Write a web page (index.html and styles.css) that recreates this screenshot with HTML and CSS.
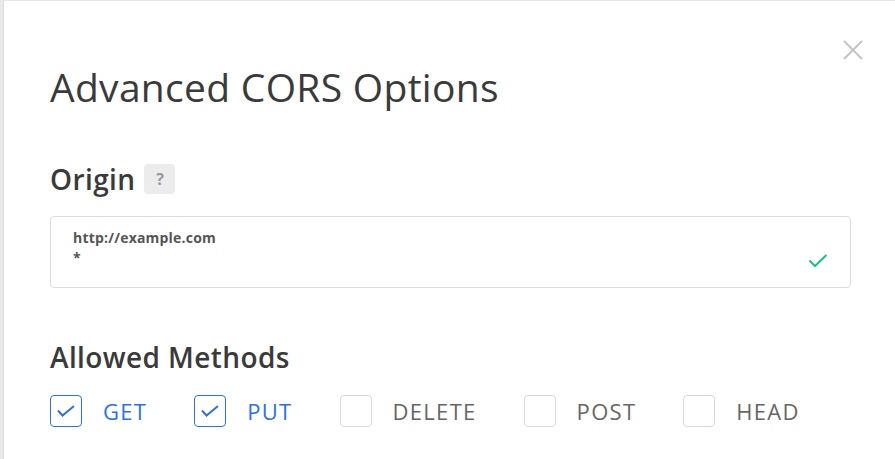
FILE: index.html
```html
<!DOCTYPE html>
<html>
<head>
<meta charset="utf-8">
<link rel="stylesheet" href="styles.css">
</head>
<body>
<div class="modal">
  <button class="close" aria-label="Close">
    <svg width="20" height="20" viewBox="0 0 20 20"><path d="M1 1 L19 19 M19 1 L1 19" stroke="#c4c4c4" stroke-width="2" fill="none"/></svg>
  </button>
  <h1 class="title">Advanced CORS Options</h1>
  <div class="section-head">
    <h2 class="label">Origin</h2>
    <span class="help">?</span>
  </div>
  <div class="input">
    <div class="input-text">
      <div class="line">http://example.com</div>
      <div class="line">*</div>
    </div>
    <svg class="ok" width="20" height="14" viewBox="0 0 20 14"><path d="M1.5 6.5 L7 12 L18.5 1" stroke="#1ec37a" stroke-width="2" fill="none"/></svg>
  </div>
  <h2 class="label methods-label">Allowed Methods</h2>
  <div class="methods">
    <label class="method checked"><span class="box"><svg width="18" height="12" viewBox="0 0 18 12"><path d="M1 5.5 L5.5 10.5 L17 1" stroke="#2b72e6" stroke-width="2" fill="none"/></svg></span><span class="name">GET</span></label>
    <label class="method checked"><span class="box"><svg width="18" height="12" viewBox="0 0 18 12"><path d="M1 5.5 L5.5 10.5 L17 1" stroke="#2b72e6" stroke-width="2" fill="none"/></svg></span><span class="name">PUT</span></label>
    <label class="method"><span class="box"></span><span class="name">DELETE</span></label>
    <label class="method"><span class="box"></span><span class="name">POST</span></label>
    <label class="method"><span class="box"></span><span class="name">HEAD</span></label>
  </div>
</div>
</body>
</html>
```
FILE: styles.css
```css
html, body {
  margin: 0;
  padding: 0;
  background: #e9e9e9;
  height: 100%;
  overflow: hidden;
}
body {
  padding-left: 3px;
  font-family: "Open Sans", "Lato", sans-serif;
  color: #333;
}
.modal {
  position: relative;
  background: #fff;
  border-left: 1px solid #dcdcdc;
  border-top: 1px solid #e6e6e6;
  min-height: 100%;
  box-sizing: border-box;
  padding: 60px 44px 0 46px;
}
.close {
  position: absolute;
  top: 39px;
  right: 32px;
  background: none;
  border: 0;
  padding: 0;
  width: 20px;
  height: 20px;
}
.close svg { display: block; }
.title {
  margin: 0;
  font-size: 39px;
  font-weight: 400;
  line-height: 52px;
  color: #3a3a3a;
  letter-spacing: 0.3px;
  white-space: nowrap;
}
.section-head {
  display: flex;
  align-items: center;
  gap: 9px;
  margin-top: 49px;
}
.label {
  margin: 0;
  font-size: 28px;
  font-weight: 600;
  line-height: 34px;
  color: #3a3a3a;
  letter-spacing: 0.4px;
}
.help {
  width: 31px;
  height: 30px;
  background: #ececec;
  border-radius: 4px;
  display: flex;
  align-items: center;
  justify-content: center;
  color: #9a9a9a;
  font-size: 16px;
  font-weight: 700;
}
.input {
  margin-top: 20px;
  height: 72px;
  border: 1px solid #dcdcdc;
  border-radius: 4px;
  box-sizing: border-box;
  display: flex;
  align-items: center;
  justify-content: space-between;
  padding: 0 22px 0 22px;
}
.input-text {
  align-self: flex-start;
  padding-top: 11px;
}
.line {
  font-size: 14px;
  font-weight: 700;
  line-height: 19px;
  color: #555;
  margin-bottom: 1px;
  letter-spacing: 0.2px;
}
.ok { margin-top: 17px; }
.methods-label {
  margin-top: 52px;
}
.methods {
  display: flex;
  gap: 47px;
  margin-top: 21px;
}
.method {
  display: flex;
  align-items: center;
  gap: 21px;
}
.box {
  width: 32px;
  height: 32px;
  box-sizing: border-box;
  border: 1px solid #d9d9d9;
  border-radius: 4px;
  display: flex;
  align-items: center;
  justify-content: center;
}
.checked .box { border-color: #2b72e6; }
.name {
  font-size: 22px;
  color: #666;
  letter-spacing: 1.3px;
}
.checked .name { color: #2b72e6; }
```
